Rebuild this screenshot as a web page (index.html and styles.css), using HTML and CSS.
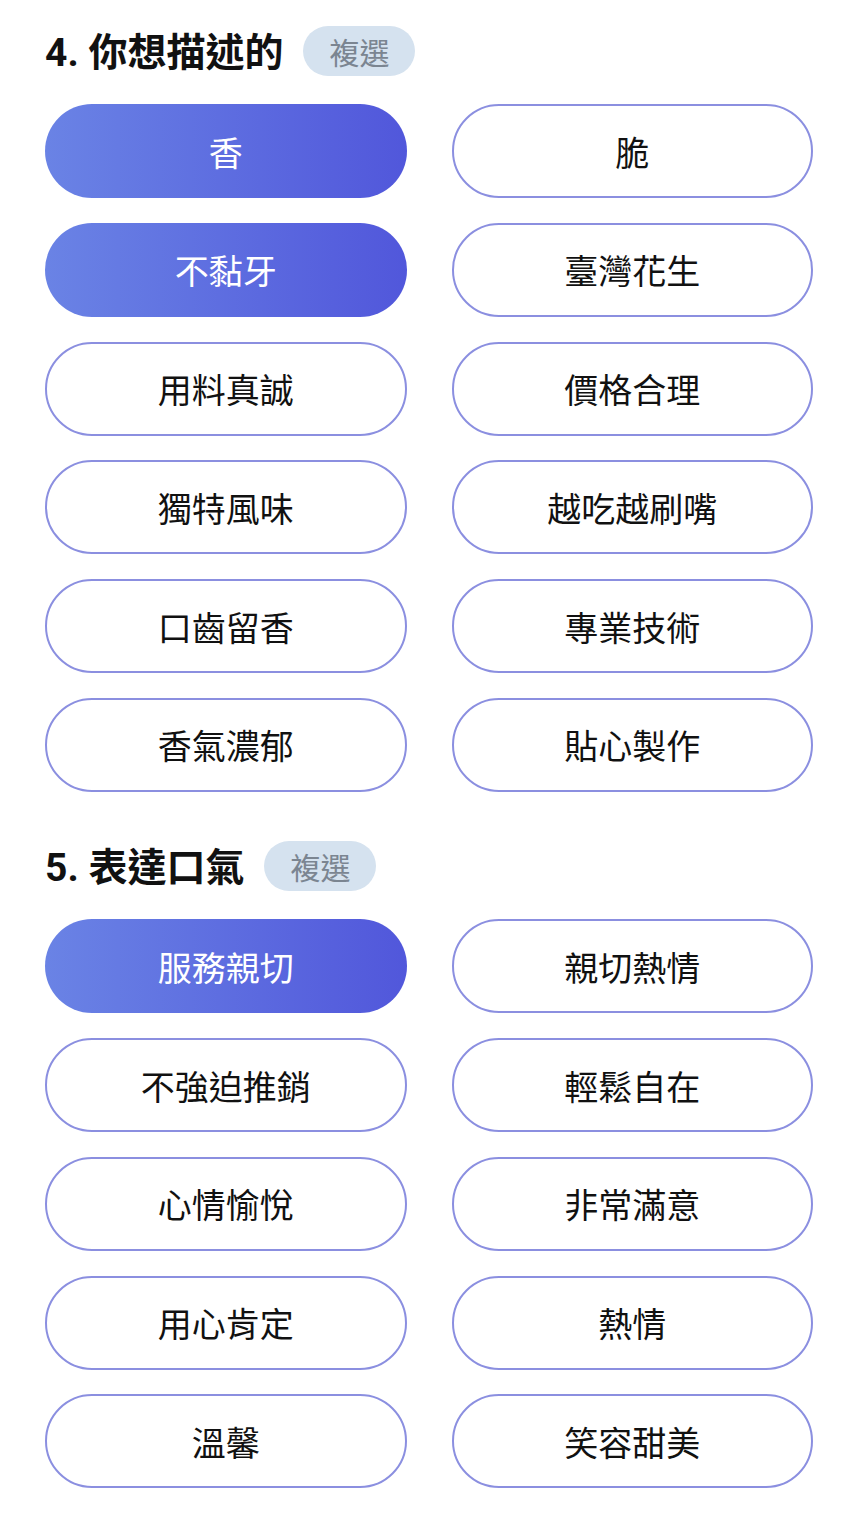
FILE: index.html
```html
<!DOCTYPE html>
<html lang="zh-Hant">
<head>
    <meta charset="UTF-8">
    <title>評論標籤</title>
    <link rel="stylesheet" href="styles.css">
</head>
<body>
    <section class="group">
        <div class="group-head">
            <h2 class="group-title">4. 你想描述的</h2>
            <span class="badge">複選</span>
        </div>
        <div class="options">
            <button class="option selected">香</button>
            <button class="option">脆</button>
            <button class="option selected">不黏牙</button>
            <button class="option">臺灣花生</button>
            <button class="option">用料真誠</button>
            <button class="option">價格合理</button>
            <button class="option">獨特風味</button>
            <button class="option">越吃越刷嘴</button>
            <button class="option">口齒留香</button>
            <button class="option">專業技術</button>
            <button class="option">香氣濃郁</button>
            <button class="option">貼心製作</button>
        </div>
    </section>
    <section class="group">
        <div class="group-head">
            <h2 class="group-title">5. 表達口氣</h2>
            <span class="badge">複選</span>
        </div>
        <div class="options">
            <button class="option selected">服務親切</button>
            <button class="option">親切熱情</button>
            <button class="option">不強迫推銷</button>
            <button class="option">輕鬆自在</button>
            <button class="option">心情愉悅</button>
            <button class="option">非常滿意</button>
            <button class="option">用心肯定</button>
            <button class="option">熱情</button>
            <button class="option">溫馨</button>
            <button class="option">笑容甜美</button>
        </div>
    </section>
</body>
</html>
```

FILE: styles.css
```css
body {
    margin: 0;
    padding: 25.5px 45px 0;
    background: #fff;
    font-family: Roboto, "Noto Sans CJK TC", sans-serif;
    color: #111;
}
.group + .group {
    margin-top: 49px;
}
.group-head {
    display: flex;
    align-items: center;
    gap: 20px;
    height: 50px;
}
.group-title {
    margin: 0;
    font-size: 39px;
    font-weight: 700;
    line-height: 1;
    padding-top: 5px;
}
.badge {
    display: flex;
    align-items: center;
    height: 50px;
    padding: 0 26px;
    border-radius: 25px;
    background: #d5e2ef;
    color: #7b8591;
    font-size: 30px;
    font-family: "Noto Sans CJK TC", sans-serif;
}
.options {
    display: grid;
    grid-template-columns: 1fr 1fr;
    column-gap: 45px;
    row-gap: 24.75px;
    margin-top: 28.5px;
}
.option {
    height: 94px;
    border: 2px solid #8b8fe0;
    border-radius: 47px;
    background: #fff;
    color: #111;
    font-family: "Noto Sans CJK TC", sans-serif;
    font-size: 34px;
    padding: 0;
    cursor: pointer;
}
.option.selected {
    border-color: transparent;
    background: linear-gradient(90deg, #6a83e5, #5157db);
    background-origin: border-box;
    color: #fff;
}
```
